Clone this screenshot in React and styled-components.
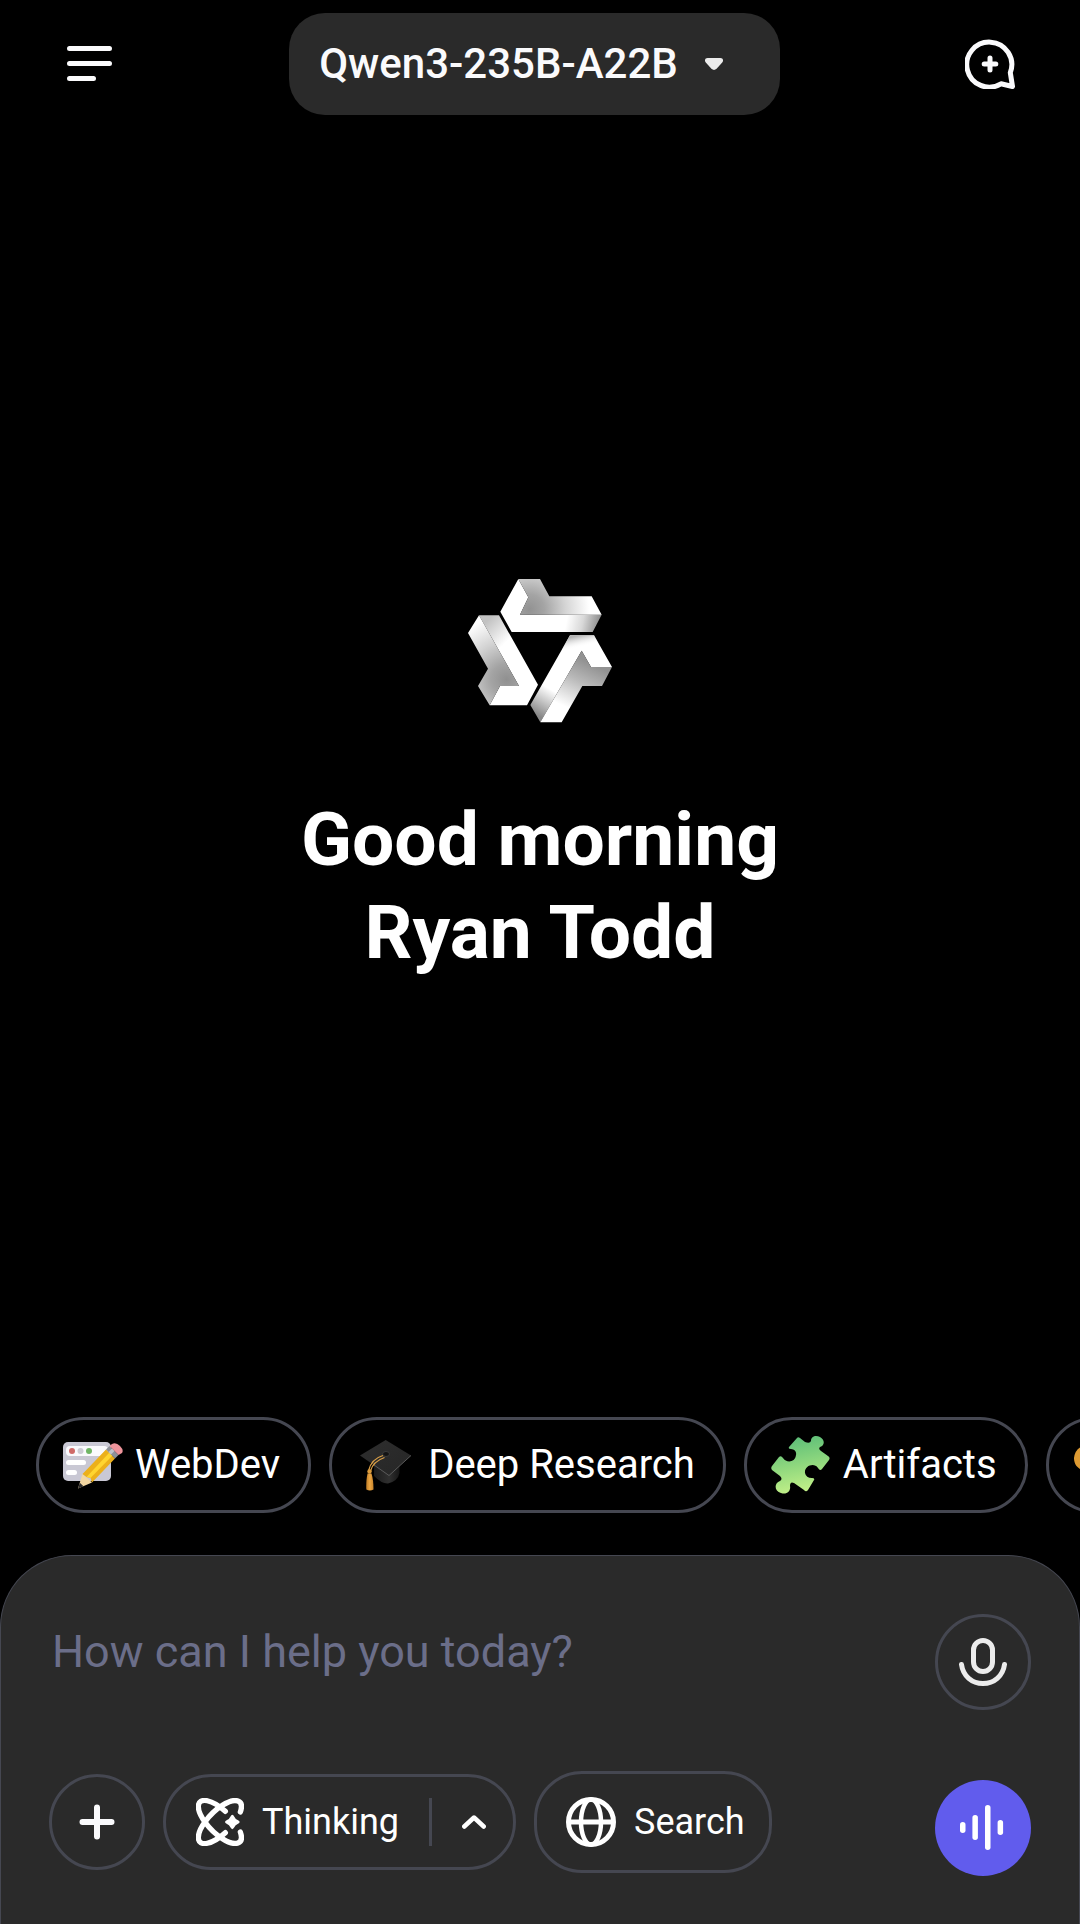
import React from "react";
import styled, { createGlobalStyle } from "styled-components";

const GlobalStyle = createGlobalStyle`
  *, *::before, *::after { box-sizing: border-box; }
  body {
    margin: 0;
    background: #000;
    color: #fafafc;
    font-family: Roboto, "Noto Sans", sans-serif;
  }
  button, textarea {
    margin: 0;
    padding: 0;
    border: 0;
    background: none;
    color: inherit;
    font: inherit;
  }
  button { cursor: pointer; }
  svg { display: block; flex: none; }
`;

const Page = styled.div`
  display: flex;
  flex-direction: column;
  min-height: 100vh;
  overflow: hidden;
`;

const Header = styled.header`
  display: flex;
  align-items: center;
  justify-content: space-between;
  padding: 13px 65px 26px 67px;
`;

const IconButton = styled.button`
  display: flex;
  align-items: center;
`;

const ModelPicker = styled.button`
  display: flex;
  align-items: center;
  gap: 27px;
  height: 102px;
  padding: 0 57px 0 30px;
  margin-right: 8px;
  border-radius: 36px;
  background: #2a2a2a;
  font-size: 42px;
  font-weight: 500;
  line-height: 50px;
  white-space: nowrap;
`;

const Main = styled.main`
  display: flex;
  flex: 1;
  flex-direction: column;
  align-items: center;
  justify-content: center;
  gap: 70px;
`;

const Greeting = styled.h1`
  margin: 0;
  color: #fff;
  font-size: 75px;
  font-weight: 700;
  line-height: 93px;
  text-align: center;
`;

const Chips = styled.nav`
  display: flex;
  gap: 18px;
  padding: 0 36px 42px;
  overflow: hidden;
`;

const Chip = styled.button`
  display: flex;
  flex: none;
  align-items: center;
  gap: 12px;
  height: 96px;
  padding: 0 28px 0 24px;
  border: 3px solid #454751;
  border-radius: 48px;
  color: #fff;
  font-size: 40px;
  line-height: 46px;
  white-space: nowrap;
`;

const Composer = styled.form`
  display: flex;
  justify-content: space-between;
  gap: 24px;
  padding: 58px 48px 48px;
  border: 1px solid #454751;
  border-bottom: 0;
  border-radius: 72px 72px 0 0;
  background: #2a2a2a;
`;

const Editor = styled.div`
  display: flex;
  flex: 1;
  flex-direction: column;
  gap: 85px;
  min-width: 0;
`;

const Prompt = styled.textarea`
  display: block;
  width: 100%;
  height: 72px;
  padding: 12px 3px 8px;
  outline: 0;
  resize: none;
  overflow: hidden;
  font-size: 45px;
  line-height: 52px;
  &::placeholder { color: #6b6e89; opacity: 1; }
`;

const Tools = styled.div`
  display: flex;
  align-items: center;
  gap: 18px;
`;

const Actions = styled.div`
  display: flex;
  flex-direction: column;
  gap: 70px;
`;

const RoundButton = styled.button`
  display: flex;
  flex: none;
  align-items: center;
  justify-content: center;
  width: 96px;
  height: 96px;
  border: ${(p) => (p.$primary ? "0" : "3px solid #454751")};
  border-radius: 50%;
  background: ${(p) => (p.$primary ? "#615ced" : "transparent")};
`;

const ToolGroup = styled.div`
  display: flex;
  align-items: center;
  height: 96px;
  border: 3px solid #454751;
  border-radius: 48px;
`;

const ToolButton = styled.button`
  display: flex;
  align-items: center;
  gap: 18px;
  height: 90px;
  padding: 0 30px;
  color: #fff;
  font-size: 36px;
  line-height: 44px;
`;

const SearchButton = styled(ToolButton)`
  height: 102px;
  padding: 0 24px 0 29px;
  border: 3px solid #454751;
  border-radius: 48px;
`;

const MoreButton = styled.button`
  display: flex;
  align-items: center;
  height: 48px;
  padding: 0 27px 0 30px;
  border-left: 3px solid #454751;
`;

function MenuIcon() {
  return (
    <svg width="45" height="36" viewBox="0 0 45 36" stroke="#fafafc" strokeWidth="5" strokeLinecap="round">
      <path d="M2.5 2.500H42.5M2.5 17.500H42.5M2.5 32.500H26.5" />
    </svg>
  );
}

function CaretIcon() {
  return (
    <svg width="18" height="12" viewBox="0 0 18 12" fill="#ececec">
      <path d="M2.6 0H15.4C18 0 18.8 2.4 17.2 4.4L11.6 10.8Q9 13 6.4 10.8L.8 4.4C-.8 2.4 0 0 2.6 0Z" />
    </svg>
  );
}

function NewChatIcon() {
  return (
    <svg width="50" height="50" viewBox="0 0 50 50" fill="none" stroke="#fafafc" strokeWidth="5" strokeLinecap="round" strokeLinejoin="round">
      <path d="M47.5 47.5L45.3 33.6A22.5 22.5 0 1 0 36 44.8Z" />
      <path d="M25 19V31M19.200 25H30.800" />
    </svg>
  );
}

function Logo() {
  return (
    <svg width="144" height="144" viewBox="84 57 432 432" role="img" aria-label="Qwen">
      <defs>
        <radialGradient id="topInner" gradientUnits="userSpaceOnUse" cx="268" cy="148" r="180">
          <stop offset="0" stopColor="#929292" />
          <stop offset=".25" stopColor="#a4a4a4" />
          <stop offset=".6" stopColor="#d4d4d4" />
          <stop offset="1" stopColor="#fff" />
        </radialGradient>
        <linearGradient id="topOuter" gradientUnits="userSpaceOnUse" x1="380" y1="180" x2="475" y2="200">
          <stop offset="0" stopColor="#fff" />
          <stop offset=".5" stopColor="#d8d8d8" />
          <stop offset="1" stopColor="#8e8e8e" />
        </linearGradient>
        <radialGradient id="leftInner" gradientUnits="userSpaceOnUse" cx="200" cy="358" r="190">
          <stop offset="0" stopColor="#909090" />
          <stop offset=".25" stopColor="#a4a4a4" />
          <stop offset=".6" stopColor="#d2d2d2" />
          <stop offset="1" stopColor="#fff" />
        </radialGradient>
        <linearGradient id="leftOuter" gradientUnits="userSpaceOnUse" x1="135" y1="190" x2="195" y2="250">
          <stop offset="0" stopColor="#c2c2c2" />
          <stop offset="1" stopColor="#fff" />
        </linearGradient>
        <linearGradient id="rightInner" gradientUnits="userSpaceOnUse" x1="430" y1="300" x2="365" y2="435">
          <stop offset="0" stopColor="#929292" />
          <stop offset=".4" stopColor="#b8b8b8" />
          <stop offset="1" stopColor="#fff" />
        </linearGradient>
        <linearGradient id="rightOuter" gradientUnits="userSpaceOnUse" x1="290" y1="465" x2="335" y2="390">
          <stop offset="0" stopColor="#868686" />
          <stop offset="1" stopColor="#fff" />
        </linearGradient>
        <linearGradient id="rightCap" gradientUnits="userSpaceOnUse" x1="420" y1="226" x2="428" y2="260">
          <stop offset="0" stopColor="#b4b4b4" />
          <stop offset="1" stopColor="#fff" stopOpacity="0" />
        </linearGradient>
      </defs>
      <path fill="url(#topOuter)" d="M235 57L181 155L215 216H458L485 164H240L265 112Z" />
      <path fill="url(#topInner)" d="M235 57H300L328 109H455L485 164H240L265 112Z" />
      <path fill="url(#leftOuter)" d="M117 166H177L294 374L261 436H149L180 378H237Z" />
      <path fill="url(#leftInner)" d="M117 166L237 378H180L149 436L114 378L144 326L84 219Z" />
      <path fill="url(#rightOuter)" d="M390 226H462L516 321H453L425 272L301 487L271 435Z" />
      <path fill="url(#rightCap)" d="M390 226H462L486 268H366Z" />
      <path fill="url(#rightInner)" d="M425 272L453 321H516L486 378H427L365 487H301Z" />
    </svg>
  );
}

function WebDevIcon() {
  return (
    <svg width="60" height="60" viewBox="0 0 60 60">
      <rect x="0" y="7" width="48" height="39" rx="5" fill="#c9c8d4" />
      <rect x="3" y="11" width="42" height="10" rx="4" fill="#fafafd" />
      <circle cx="9" cy="16" r="3" fill="#cf6a68" />
      <circle cx="17.500" cy="16" r="3" fill="#cdccd5" />
      <circle cx="26" cy="16" r="3" fill="#6fb565" />
      <rect x="3" y="25" width="20" height="5" rx="2.500" fill="#fff" />
      <rect x="3" y="35" width="11" height="5" rx="2.500" fill="#fff" />
      <path fill="#f3d7a2" d="M15 53.500L19.500 39L29 47.500Z" />
      <path fill="#2c2c2e" d="M15 53.500L16.800 47.800L20.500 51.200Z" />
      <path fill="#ecb01b" d="M19.500 39L43 14.500L52 23.500L29 47.500L27.500 43L23.500 42Z" />
      <path fill="#ffd530" d="M23.500 42L46.500 17.500L49.500 20.500L27.500 43Z" />
      <path fill="#8e9199" d="M43 14.500L46.500 11L55.500 20L52 23.500Z" />
      <path fill="#c0c2ca" d="M45.500 17L49 13.500L51.500 16L48 19.500Z" />
      <path fill="#ee949b" d="M46.500 11L49 9Q53 7 57 11T59 18L55.500 20Z" />
    </svg>
  );
}

function CapIcon() {
  return (
    <svg width="60" height="60" viewBox="0 0 60 60">
      <defs>
        <linearGradient id="board" x1="0" y1="0" x2="1" y2="1">
          <stop offset="0" stopColor="#2e2e2e" />
          <stop offset="1" stopColor="#262626" />
        </linearGradient>
        <linearGradient id="capBase" x1="0" y1="0" x2="1" y2="0">
          <stop offset="0" stopColor="#1c1c1c" />
          <stop offset=".6" stopColor="#303030" />
          <stop offset="1" stopColor="#161616" />
        </linearGradient>
        <linearGradient id="tassel" x1="0" y1="0" x2="1" y2="0">
          <stop offset="0" stopColor="#c07d26" />
          <stop offset=".5" stopColor="#eba643" />
          <stop offset="1" stopColor="#c9852b" />
        </linearGradient>
      </defs>
      <path fill="url(#capBase)" d="M18 30V41Q26 49 32 48.500Q42 46 43.500 38V28Z" />
      <path fill="url(#board)" d="M29.700 5L55 20.500L33 40.500L4 20.500Z" />
      <path fill="none" stroke="#5a5a5a" strokeWidth="1" d="M55 20.500L33 40.500L18 30" />
      <ellipse cx="30" cy="19" rx="3.500" ry="2.500" fill="#141414" stroke="#3c3c3c" />
      <path fill="none" stroke="#dba047" strokeWidth="1.300" d="M27 20.500Q15 24 12.500 36M28.500 22.500Q17 26.500 14.500 36" />
      <circle cx="13.500" cy="36.500" r="2.200" fill="#db9b3c" />
      <path fill="url(#tassel)" d="M11.500 38.500H15.500Q17.500 45 17.500 54.500Q14 56.500 10.300 54.500Q10 45 11.500 38.500Z" />
    </svg>
  );
}

function PuzzleIcon() {
  return (
    <svg width="60" height="60" viewBox="0 0 60 60">
      <defs>
        <linearGradient id="puzzle" x1=".4" y1="0" x2=".6" y2="1">
          <stop offset="0" stopColor="#5bbd78" />
          <stop offset=".5" stopColor="#8fd87e" />
          <stop offset="1" stopColor="#c7f289" />
        </linearGradient>
      </defs>
      <path
        fill="url(#puzzle)"
        d="M26 3Q27 1.500 29 3L34 7Q39 9 40 6C40 1 45 0 49 2C54 5 54 10 49 12Q47 14 50 16L57 21Q59.500 22.500 58 25L51 34Q49 36.500 47 33C43 27 33 31 34 38Q35 43 41 43Q44 43 43 45L37 55Q35 57.500 33 55L23 48Q19 46 19 51C20 56 16 60 10 58C3 56 3 48 9 46Q12 44 9 41L1 35Q-.5 33 1 31L8 22Q10 20 12 23C15 28 24 28 25 20Q26 15 20 14Q17 14 18 12Z"
      />
    </svg>
  );
}

function PaletteIcon() {
  return (
    <svg width="60" height="60" viewBox="0 0 60 60">
      <path fill="#dd9a32" d="M8 12C20 4 46 5 56 24C62 40 50 52 38 50C30 48 32 40 25 38C16 38 1 36 1 23Q2 15 8 12Z" />
      <circle cx="18" cy="18" r="5" fill="#d84d46" />
      <circle cx="34" cy="18" r="5" fill="#4b8ee0" />
      <circle cx="46" cy="30" r="5" fill="#61b35b" />
    </svg>
  );
}

function MicIcon() {
  return (
    <svg width="48" height="48" viewBox="0 0 48 48" fill="none" stroke="#ececec" strokeWidth="5" strokeLinecap="round">
      <rect x="14.500" y="2.500" width="19" height="31" rx="9.500" />
      <path d="M2.500 26.500C4 38 13 45.500 24 45.500S44 38 45.500 26.500" />
    </svg>
  );
}

function VoiceIcon() {
  return (
    <svg width="48" height="48" viewBox="0 0 48 48" fill="#fff">
      <rect x="1" y="18" width="5.500" height="11" rx="2.750" />
      <rect x="13.400" y="11" width="5.500" height="25" rx="2.750" />
      <rect x="26" y="1" width="5.500" height="45" rx="2.750" />
      <rect x="38.600" y="16" width="5.500" height="15" rx="2.750" />
    </svg>
  );
}

function PlusIcon() {
  return (
    <svg width="36" height="36" viewBox="0 0 36 36" stroke="#fafafc" strokeWidth="6" strokeLinecap="round">
      <path d="M18 3.500V32.500M3.500 18H32.500" />
    </svg>
  );
}

function ThinkingIcon() {
  return (
    <svg width="48" height="48" viewBox="498 142 144 144" fill="none" stroke="#fff" strokeWidth="16" strokeLinecap="round">
      <path d="M586 182A84.500 34.400 45 1 0 631 244" />
      <path d="M586 246A84.500 34.400 -45 1 1 631 184" />
      <path fill="#fff" stroke="none" d="M601 198Q607 187 613 198Q616 205 623 208Q635 214 623 220Q616 223 613 230Q607 241 601 230Q598 223 591 220Q579 214 591 208Q598 205 601 198Z" />
    </svg>
  );
}

function ChevronIcon() {
  return (
    <svg width="24" height="14" viewBox="0 0 24 14" fill="none" stroke="#fff" strokeWidth="4.500" strokeLinecap="round" strokeLinejoin="round">
      <path d="M2.300 11.500L12 2.500L21.700 11.500" />
    </svg>
  );
}

function GlobeIcon() {
  return (
    <svg width="50" height="50" viewBox="0 0 50 50" fill="none" stroke="#fff" strokeWidth="5">
      <circle cx="25" cy="25" r="22.500" />
      <ellipse cx="25" cy="25" rx="10" ry="22.500" strokeWidth="4.500" />
      <path d="M2.500 25H47.500" />
    </svg>
  );
}

const suggestions = [
  { label: "WebDev", Icon: WebDevIcon },
  { label: "Deep Research", Icon: CapIcon },
  { label: "Artifacts", Icon: PuzzleIcon },
  { label: "", Icon: PaletteIcon },
];

export default function App() {
  return (
    <Page>
      <GlobalStyle />
      <Header>
        <IconButton type="button" aria-label="Menu">
          <MenuIcon />
        </IconButton>
        <ModelPicker type="button">
          Qwen3-235B-A22B
          <CaretIcon />
        </ModelPicker>
        <IconButton type="button" aria-label="New chat">
          <NewChatIcon />
        </IconButton>
      </Header>
      <Main>
        <Logo />
        <Greeting>
          Good morning
          <br />
          Ryan Todd
        </Greeting>
      </Main>
      <Chips>
        {suggestions.map(({ label, Icon }, i) => (
          <Chip key={i} type="button" aria-label={label || "Images"}>
            <Icon />
            {label}
          </Chip>
        ))}
      </Chips>
      <Composer onSubmit={(e) => e.preventDefault()}>
        <Editor>
          <Prompt rows={1} aria-label="Message" placeholder="How can I help you today?" />
          <Tools>
            <RoundButton type="button" aria-label="Add attachment">
              <PlusIcon />
            </RoundButton>
            <ToolGroup>
              <ToolButton type="button">
                <ThinkingIcon />
                Thinking
              </ToolButton>
              <MoreButton type="button" aria-label="Thinking options">
                <ChevronIcon />
              </MoreButton>
            </ToolGroup>
            <SearchButton type="button">
              <GlobeIcon />
              Search
            </SearchButton>
          </Tools>
        </Editor>
        <Actions>
          <RoundButton type="button" aria-label="Dictate">
            <MicIcon />
          </RoundButton>
          <RoundButton type="button" $primary aria-label="Voice chat">
            <VoiceIcon />
          </RoundButton>
        </Actions>
      </Composer>
    </Page>
  );
}
